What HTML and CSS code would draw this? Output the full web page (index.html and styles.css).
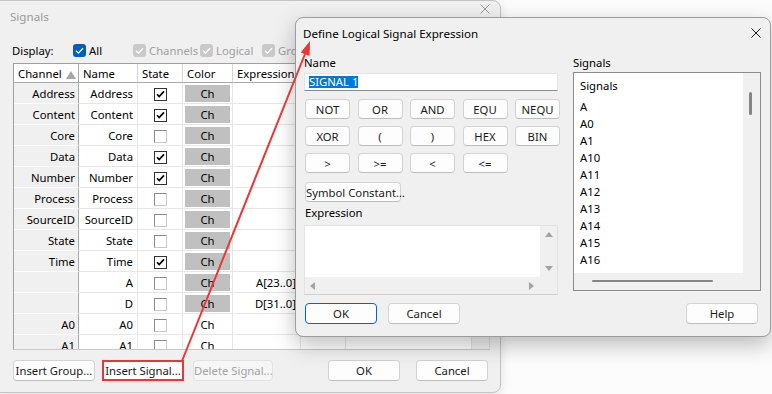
FILE: index.html
```html
<!DOCTYPE html>
<html lang="en">
<head>
  <meta charset="UTF-8">
  <title>Signals</title>
  <link rel="stylesheet" href="styles.css">
</head>
<body>
  <div class="desktop">

    <div class="win signals">
      <div class="titlebar">
        <span>Signals</span>
        <svg class="close" width="10" height="10" viewBox="0 0 10 10"><path d="M0.5 0.5 L9.5 9.5 M9.5 0.5 L0.5 9.5" stroke="#9a9a9a" stroke-width="1"/></svg>
      </div>

      <div class="display-row">
        <span>Display:</span>
        <label class="chk on"><span class="box"><svg width="13" height="13" viewBox="0 0 13 13"><path d="M3 6.8 L5.4 9.1 L10 4.2" fill="none" stroke="#fff" stroke-width="1.3"/></svg></span>All</label>
        <label class="chk off"><span class="box"><svg width="13" height="13" viewBox="0 0 13 13"><path d="M3 6.8 L5.4 9.1 L10 4.2" fill="none" stroke="#fff" stroke-width="1.3"/></svg></span>Channels</label>
        <label class="chk off"><span class="box"><svg width="13" height="13" viewBox="0 0 13 13"><path d="M3 6.8 L5.4 9.1 L10 4.2" fill="none" stroke="#fff" stroke-width="1.3"/></svg></span>Logical</label>
        <label class="chk off"><span class="box"><svg width="13" height="13" viewBox="0 0 13 13"><path d="M3 6.8 L5.4 9.1 L10 4.2" fill="none" stroke="#fff" stroke-width="1.3"/></svg></span>Groups</label>
      </div>

      <div class="grid-wrap">
        <div class="grid-area">
          <table class="grid">
            <colgroup>
              <col style="width:65px"><col style="width:59px"><col style="width:45px"><col style="width:50px">
              <col style="width:68px"><col style="width:45px"><col style="width:127px">
            </colgroup>
            <thead>
              <tr>
                <th class="sorted">Channel<svg width="10" height="8" viewBox="0 0 10 8"><path d="M0 8 L5 0 L10 8 Z" fill="#a6a6a6"/></svg></th>
                <th>Name</th><th>State</th><th>Color</th><th>Expression</th><th></th><th></th>
              </tr>
            </thead>
            <tbody>
              <tr><td class="ch">Address</td><td class="nm">Address</td><td><span class="cb checked"></span></td><td><span class="swatch">Ch</span></td><td></td><td></td><td></td></tr>
              <tr><td class="ch">Content</td><td class="nm">Content</td><td><span class="cb checked"></span></td><td><span class="swatch">Ch</span></td><td></td><td></td><td></td></tr>
              <tr><td class="ch">Core</td><td class="nm">Core</td><td><span class="cb"></span></td><td><span class="swatch">Ch</span></td><td></td><td></td><td></td></tr>
              <tr><td class="ch">Data</td><td class="nm">Data</td><td><span class="cb checked"></span></td><td><span class="swatch">Ch</span></td><td></td><td></td><td></td></tr>
              <tr><td class="ch">Number</td><td class="nm">Number</td><td><span class="cb checked"></span></td><td><span class="swatch">Ch</span></td><td></td><td></td><td></td></tr>
              <tr><td class="ch">Process</td><td class="nm">Process</td><td><span class="cb"></span></td><td><span class="swatch">Ch</span></td><td></td><td></td><td></td></tr>
              <tr><td class="ch">SourceID</td><td class="nm">SourceID</td><td><span class="cb"></span></td><td><span class="swatch">Ch</span></td><td></td><td></td><td></td></tr>
              <tr><td class="ch">State</td><td class="nm">State</td><td><span class="cb"></span></td><td><span class="swatch">Ch</span></td><td></td><td></td><td></td></tr>
              <tr><td class="ch">Time</td><td class="nm">Time</td><td><span class="cb checked"></span></td><td><span class="swatch">Ch</span></td><td></td><td></td><td></td></tr>
              <tr><td class="ch"></td><td class="nm">A</td><td><span class="cb"></span></td><td><span class="swatch">Ch</span></td><td class="ex">A[23..0]</td><td></td><td></td></tr>
              <tr><td class="ch"></td><td class="nm">D</td><td><span class="cb"></span></td><td><span class="swatch">Ch</span></td><td class="ex">D[31..0]</td><td></td><td></td></tr>
              <tr><td class="ch">A0</td><td class="nm">A0</td><td><span class="cb"></span></td><td><span class="swatch plain">Ch</span></td><td></td><td></td><td></td></tr>
              <tr><td class="ch">A1</td><td class="nm">A1</td><td><span class="cb"></span></td><td><span class="swatch plain">Ch</span></td><td></td><td></td><td></td></tr>
            </tbody>
          </table>
        </div>
        <div class="grid-vscroll"></div>
      </div>

      <div class="win-buttons">
        <button class="btn wide">Insert Group...</button>
        <button class="btn">Insert Signal...</button>
        <button class="btn" disabled>Delete Signal...</button>
        <span class="spacer"></span>
        <button class="btn std">OK</button>
        <button class="btn std">Cancel</button>
      </div>
    </div>

    <div class="win dlg">
      <div class="dlg-title">
        <span>Define Logical Signal Expression</span>
        <svg class="close" width="10" height="10" viewBox="0 0 10 10"><path d="M0.5 0.5 L9.5 9.5 M9.5 0.5 L0.5 9.5" stroke="#1a1a1a" stroke-width="1"/></svg>
      </div>

      <div class="dlg-body">
        <div class="col-left">
          <div class="field-label">Name</div>
          <div class="textbox"><span class="sel">SIGNAL 1</span></div>

          <div class="ops">
            <button class="btn op">NOT</button>
            <button class="btn op">OR</button>
            <button class="btn op">AND</button>
            <button class="btn op">EQU</button>
            <button class="btn op">NEQU</button>
            <button class="btn op">XOR</button>
            <button class="btn op">(</button>
            <button class="btn op">)</button>
            <button class="btn op">HEX</button>
            <button class="btn op">BIN</button>
            <button class="btn op">&gt;</button>
            <button class="btn op">&gt;=</button>
            <button class="btn op">&lt;</button>
            <button class="btn op">&lt;=</button>
          </div>

          <button class="btn sym">Symbol Constant…</button>

          <div class="field-label expr-label">Expression</div>
          <div class="expr-box">
            <div class="expr-text"></div>
            <div class="vsb">
              <svg width="8" height="5" viewBox="0 0 8 5"><path d="M0 5 L4 0 L8 5 Z" fill="#a3a3a3"/></svg>
              <svg width="8" height="5" viewBox="0 0 8 5"><path d="M0 0 L4 5 L8 0 Z" fill="#a3a3a3"/></svg>
            </div>
            <div class="hsb">
              <svg width="5" height="8" viewBox="0 0 5 8"><path d="M5 0 L0 4 L5 8 Z" fill="#a3a3a3"/></svg>
              <svg width="5" height="8" viewBox="0 0 5 8"><path d="M0 0 L5 4 L0 8 Z" fill="#a3a3a3"/></svg>
            </div>
            <div class="sb-corner"></div>
          </div>
        </div>

        <div class="col-right">
          <div class="field-label">Signals</div>
          <div class="listbox">
            <ul class="items">
              <li class="head">Signals</li>
              <li>A</li>
              <li>A0</li>
              <li>A1</li>
              <li>A10</li>
              <li>A11</li>
              <li>A12</li>
              <li>A13</li>
              <li>A14</li>
              <li>A15</li>
              <li>A16</li>
            </ul>
            <div class="list-vsb"><span class="thumb"></span></div>
            <div class="list-hsb"><span class="thumb"></span></div>
            <div class="sb-corner"></div>
          </div>
        </div>
      </div>

      <div class="dlg-foot">
        <button class="btn std default">OK</button>
        <button class="btn std">Cancel</button>
        <span class="spacer"></span>
        <button class="btn std">Help</button>
      </div>
    </div>

    <svg class="callout" width="772" height="394" viewBox="0 0 772 394">
      <rect x="103" y="361" width="80" height="19" fill="none" stroke="#ee3535" stroke-width="2"/>
      <line x1="182" y1="361" x2="305" y2="54" stroke="#ee3535" stroke-width="2"/>
      <polygon points="310,41 309.6,56 300.8,52.4" fill="#ee3535"/>
    </svg>

  </div>
</body>
</html>
```

FILE: styles.css
```css
body {
  margin: 0;
  font-family: "Segoe UI", "Noto Sans", sans-serif;
  font-size: 11.3px;
  color: #000;
}
.desktop {
  position: relative;
  width: 772px;
  height: 394px;
  overflow: hidden;
  background-color: #fcfcfc;
}
.win {
  position: absolute;
  box-sizing: border-box;
  background-color: #f0f0f0;
  display: flex;
  flex-direction: column;
}
.close {
  display: block;
}

/* Signals window (inactive, behind) */
.signals {
  left: -1px;
  top: 0;
  width: 502px;
  height: 393px;
  border: 1px solid #c4c4c4;
  border-radius: 0 8px 8px 0;
  box-shadow: 0 2px 10px rgba(0, 0, 0, 0.12);
}
.titlebar {
  height: 31px;
  display: flex;
  align-items: center;
  justify-content: space-between;
  padding: 0 10px 0 10px;
  color: #9a9a9a;
  font-size: 11.6px;
}
.titlebar span {
  margin-top: -1px;
}
.titlebar .close {
  margin-top: -16px;
}
.display-row {
  display: grid;
  grid-template-columns: 61px 60px 67px 62px auto;
  align-items: center;
  height: 20px;
  margin-top: 8px;
  padding-left: 12px;
  white-space: nowrap;
}
.chk {
  display: flex;
  align-items: center;
  gap: 3px;
}
.chk .box {
  width: 13px;
  height: 13px;
  border-radius: 3px;
  display: block;
}
.chk .box svg {
  display: block;
}
.chk.on .box {
  background-color: #005fb8;
}
.chk.off {
  color: #a0a0a0;
}
.chk.off .box {
  background-color: #c9c9c9;
}

.grid-wrap {
  display: flex;
  margin: 3px 0 0 13px;
  width: 477px;
  height: 287px;
  box-sizing: border-box;
  border: 1px solid #a0a0a0;
  border-right-color: #dcdcdc;
  border-bottom-color: #c8c8c8;
  background-color: #fff;
  overflow: hidden;
}
.grid-area {
  flex: 1;
  overflow: hidden;
}
.grid-vscroll {
  width: 17px;
  background-color: #f0f0f0;
  border-left: 1px solid #e3e3e3;
}
.grid {
  table-layout: fixed;
  border-collapse: separate;
  border-spacing: 0;
  width: 459px;
}
.grid th {
  height: 18px;
  padding: 0 4px;
  font-weight: normal;
  text-align: left;
  white-space: nowrap;
  border-right: 1px solid #d6d6d6;
  border-bottom: 1px solid #a8a8a8;
  background-color: #fff;
}
.grid th.sorted {
  border-right-color: #a8a8a8;
}
.grid th.sorted svg {
  margin-left: 4px;
  vertical-align: -1px;
}
.grid td {
  height: 20px;
  padding: 0 4px;
  white-space: nowrap;
  overflow: hidden;
  border-right: 1px solid #e6e6e6;
  border-bottom: 1px solid #e6e6e6;
}
.grid td.ch {
  text-align: right;
  padding-right: 3px;
  background-color: #f0f0f0;
  border-right: 1px solid #a8a8a8;
  border-bottom: 1px solid #fdfdfd;
}
.grid td.nm {
  text-align: right;
}
.grid td.ex {
  text-align: right;
}
.grid td:nth-child(3) {
  text-align: center;
  padding: 0;
}
.grid td:nth-child(4) {
  padding: 0 2px;
}
.cb {
  display: inline-block;
  width: 11px;
  height: 11px;
  vertical-align: middle;
  background-color: #fff;
  border: 1px solid #8a8a8a;
  border-right-color: #c8c8c8;
  border-bottom-color: #c8c8c8;
  margin-left: 1px;
}
.cb.checked {
  border-color: #333;
  background: #fff url("data:image/svg+xml;utf8,<svg xmlns='http://www.w3.org/2000/svg' width='11' height='11' viewBox='0 0 11 11'><path d='M2 5.2 L4.2 7.6 L9 2.4' fill='none' stroke='black' stroke-width='1.7'/></svg>") no-repeat center;
}
.swatch {
  display: block;
  height: 17px;
  line-height: 17px;
  text-align: center;
  background-color: #c0c0c0;
}
.swatch.plain {
  background-color: transparent;
}

.win-buttons {
  display: flex;
  align-items: center;
  margin-top: 10px;
  padding: 0 12px 0 13px;
}
.win-buttons .btn {
  width: 80px;
  margin-right: 10px;
}
.win-buttons .btn.wide {
  width: 82px;
  margin-right: 8px;
}
.win-buttons .btn.std {
  width: 72px;
  margin-right: 0;
}
.win-buttons .btn.std + .btn.std {
  margin-left: 16px;
}
.spacer {
  flex: 1;
}

.btn {
  font: inherit;
  height: 21px;
  padding: 0;
  color: #1a1a1a;
  background-color: #fdfdfd;
  border: 1px solid #d3d3d3;
  border-bottom-color: #bdbdbd;
  border-radius: 4px;
  white-space: nowrap;
}
.btn:disabled {
  color: #a3a3a3;
  background-color: #f6f6f6;
  border-color: #e2e2e2;
}

/* Define Logical Signal Expression dialog */
.dlg {
  left: 295px;
  top: 17px;
  width: 476px;
  height: 320px;
  border: 1px solid #9c9c9c;
  border-radius: 8px;
  box-shadow: 0 8px 22px rgba(0, 0, 0, 0.26);
}
.dlg-title {
  height: 30px;
  display: flex;
  align-items: center;
  justify-content: space-between;
  padding: 0 9px 0 7px;
  font-size: 11.6px;
}
.dlg-body {
  display: grid;
  grid-template-columns: 254px 188px;
  column-gap: 15px;
  padding: 7px 9px 0 8px;
}
.field-label {
  height: 16px;
  line-height: 16px;
}
.textbox {
  margin-top: 2px;
  height: 18px;
  box-sizing: border-box;
  background-color: #fff;
  border: 1px solid #e4e4e4;
  border-bottom-color: #8a8a8a;
  padding-left: 4px;
  display: flex;
  align-items: center;
}
.sel {
  background-color: #0078d7;
  color: #fff;
  line-height: 12px;
}
.ops {
  display: grid;
  grid-template-columns: repeat(5, 45px);
  column-gap: 7.5px;
  row-gap: 7px;
  margin: 8px 0 0 1px;
}
.btn.op {
  height: 20px;
}
.btn.sym {
  margin: 9px 0 0 1px;
  width: 96px;
  height: 20px;
}
.expr-label {
  margin-top: 3px;
  padding-left: 1px;
}
.expr-box {
  margin-top: 4px;
  height: 70px;
  box-sizing: border-box;
  display: grid;
  grid-template-columns: 1fr 17px;
  grid-template-rows: 1fr 17px;
  border: 1px solid #e2e2e2;
  border-bottom-color: #cfcfcf;
  background-color: #fff;
}
.expr-text {
  background-color: #fff;
}
.vsb {
  display: flex;
  flex-direction: column;
  justify-content: space-between;
  align-items: center;
  padding: 6px 0;
  background-color: #f0f0f0;
}
.hsb {
  display: flex;
  justify-content: space-between;
  align-items: center;
  padding: 0 6px 0 5px;
  background-color: #f0f0f0;
}
.sb-corner {
  background-color: #f0f0f0;
}
.vsb svg, .hsb svg {
  display: block;
}

.listbox {
  margin-top: 1px;
  height: 219px;
  box-sizing: border-box;
  border: 1px solid #8c8c8c;
  display: grid;
  grid-template-columns: 1fr 17px;
  grid-template-rows: 1fr 17px;
  background-color: #f0f0f0;
}
.items {
  list-style: none;
  margin: 0;
  padding: 4px 0 0 6px;
  background-color: #fff;
  overflow: hidden;
}
.items li {
  height: 17px;
  line-height: 17px;
}
.items li.head {
  margin-bottom: 4px;
}
.list-vsb .thumb {
  display: block;
  width: 3px;
  height: 23px;
  margin: 19px 0 0 6px;
  border-radius: 2px;
  background-color: #858585;
}
.list-hsb .thumb {
  display: block;
  width: 121px;
  height: 2px;
  margin: 7px 0 0 18px;
  border-radius: 2px;
  background-color: #858585;
}

.dlg-foot {
  display: flex;
  align-items: center;
  margin-top: 8px;
  padding: 0 12px 0 9px;
}
.dlg-foot .btn {
  width: 72px;
  height: 21px;
}
.dlg-foot .btn + .btn {
  margin-left: 11px;
}
.dlg-foot .btn.default {
  border-color: #0067c0;
}

.callout {
  position: absolute;
  left: 0;
  top: 0;
  pointer-events: none;
}
```
